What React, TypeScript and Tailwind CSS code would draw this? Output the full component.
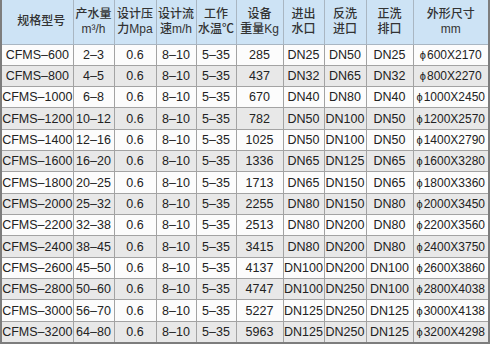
import React from 'react'

// Column widths taken from the reference grid lines
const cols = [72, 41, 42, 40, 40, 47, 41, 42, 47, 76]

const headers: string[][] = [
  ['规格型号'],
  ['产水量', 'm³/h'],
  ['设计压', '力Mpa'],
  ['设计流', '速m/h'],
  ['工作', '水温℃'],
  ['设备', '重量Kg'],
  ['进出', '水口'],
  ['反洗', '进口'],
  ['正洗', '排口'],
  ['外形尺寸', 'mm'],
]

const rows: string[][] = [
  ['CFMS–600', '2–3', '0.6', '8–10', '5–35', '285', 'DN25', 'DN50', 'DN25', '600X2170'],
  ['CFMS–800', '4–5', '0.6', '8–10', '5–35', '437', 'DN32', 'DN65', 'DN32', '800X2270'],
  ['CFMS–1000', '6–8', '0.6', '8–10', '5–35', '670', 'DN40', 'DN80', 'DN40', '1000X2450'],
  ['CFMS–1200', '10–12', '0.6', '8–10', '5–35', '782', 'DN50', 'DN100', 'DN50', '1200X2570'],
  ['CFMS–1400', '12–16', '0.6', '8–10', '5–35', '1025', 'DN50', 'DN100', 'DN50', '1400X2790'],
  ['CFMS–1600', '16–20', '0.6', '8–10', '5–35', '1336', 'DN65', 'DN125', 'DN65', '1600X3280'],
  ['CFMS–1800', '20–25', '0.6', '8–10', '5–35', '1713', 'DN65', 'DN150', 'DN65', '1800X3360'],
  ['CFMS–2000', '25–32', '0.6', '8–10', '5–35', '2255', 'DN80', 'DN150', 'DN80', '2000X3450'],
  ['CFMS–2200', '32–38', '0.6', '8–10', '5–35', '2513', 'DN80', 'DN200', 'DN80', '2200X3560'],
  ['CFMS–2400', '38–45', '0.6', '8–10', '5–35', '3415', 'DN80', 'DN200', 'DN80', '2400X3750'],
  ['CFMS–2600', '45–50', '0.6', '8–10', '5–35', '4137', 'DN100', 'DN200', 'DN100', '2600X3860'],
  ['CFMS–2800', '50–60', '0.6', '8–10', '5–35', '4747', 'DN100', 'DN250', 'DN100', '2800X4038'],
  ['CFMS–3000', '56–70', '0.6', '8–10', '5–35', '5227', 'DN125', 'DN250', 'DN125', '3000X4138'],
  ['CFMS–3200', '64–80', '0.6', '8–10', '5–35', '5963', 'DN125', 'DN250', 'DN125', '3200X4298'],
]

export default function App() {
  return (
    <div className="h-[345px] w-[492px] overflow-hidden bg-white">
      <table
        className="w-[490px] table-fixed border-collapse border-b-2 border-l-2 border-r-2 border-[#7d7d7d] text-[#222]"
        style={{ fontFamily: '"Liberation Sans", Arial, sans-serif' }}
      >
        <colgroup>
          {cols.map((w, i) => (
            <col key={i} style={{ width: w }} />
          ))}
        </colgroup>
        <thead>
          <tr className="h-[44px] bg-[#cde3f5]">
            {headers.map((h, i) => (
              <th
                key={i}
                className={`border border-t-0 border-[#a9b6c2] p-0 text-center text-[12px] font-medium leading-[15px] text-[#333] ${i === 0 ? 'pl-2' : ''}`}
                style={{ fontFamily: '"Liberation Sans", "Noto Sans CJK SC", sans-serif' }}
              >
                {h.map((line, j) => (
                  <div key={j} className="whitespace-nowrap">{line}</div>
                ))}
              </th>
            ))}
          </tr>
        </thead>
        <tbody>
          {rows.map((r, ri) => (
            <tr key={ri} className={`h-[21.33px] ${ri % 2 === 1 ? 'bg-[#e8e8e8]' : 'bg-[#fcfcfc]'}`}>
              {r.map((c, ci) => (
                <td
                  key={ci}
                  className={`whitespace-nowrap border border-[#a3a3a3] p-0 text-center leading-[20px] ${ci === 9 ? 'text-[12px]' : 'text-[12.5px]'}`}
                >
                  {ci === 9 ? (
                    <span>
                      <span className="mr-[1px] text-[11px]">ϕ</span>
                      {c}
                    </span>
                  ) : (
                    c
                  )}
                </td>
              ))}
            </tr>
          ))}
        </tbody>
      </table>
    </div>
  )
}
